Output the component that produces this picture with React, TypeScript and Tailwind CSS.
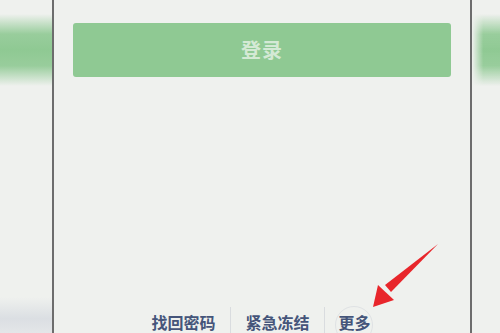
import React from "react";

export default function App() {
  return (
    <div
      className="w-[500px] h-[333px] overflow-hidden bg-[#eff1ee] flex relative"
      style={{ fontFamily: '"Noto Sans CJK SC", "Noto Sans", sans-serif' }}
    >
      {/* left blurred side */}
      <div className="w-[52px] h-full flex flex-col">
        <div className="h-[14px]" />
        <div className="h-[72px] bg-[linear-gradient(to_bottom,rgba(143,201,147,0)_0%,rgba(143,201,147,0.9)_28%,rgba(143,201,147,1)_50%,rgba(143,201,147,0.9)_72%,rgba(143,201,147,0)_100%)]" />
        <div className="flex-1" />
        <div className="h-[36px] bg-[linear-gradient(to_bottom,rgba(214,218,224,0)_0%,rgba(214,218,224,0.8)_60%,rgba(220,223,228,0.6)_100%)]" />
      </div>
      <div className="w-[2px] h-full bg-[#6d6d6d]" />
      {/* phone screen */}
      <div className="w-[416px] h-full flex flex-col px-[19px] pt-[23px]">
        <div className="h-[54px] rounded-[3px] bg-[#8fc993] flex items-center justify-center">
          <span className="text-[20px] font-bold text-[#d4e9d5] tracking-[1px] leading-none">登录</span>
        </div>
        <div className="flex-1" />
        <div className="h-[26px] flex items-stretch justify-center text-[16px] font-bold text-[#45557a] leading-none">
          <div className="flex items-center pl-[78px] pr-[15px] pt-[3px]">找回密码</div>
          <div className="w-px bg-[#d9dcdf]" />
          <div className="flex items-center px-[14px] pt-[3px]">紧急冻结</div>
          <div className="w-px bg-[#d9dcdf]" />
          <div className="flex items-center pl-[14px] pr-[80px] pt-[3px] relative">
            <span className="relative">
              更多
              <span className="absolute left-[-4px] top-[-8px] w-[38px] h-[38px] rounded-full border border-[#dfe2e4]" />
            </span>
          </div>
        </div>
      </div>
      <div className="w-[2px] h-full bg-[#6d6d6d]" />
      {/* right blurred side */}
      <div className="flex-1 h-full flex flex-col">
        <div className="h-[14px]" />
        <div className="h-[72px] bg-[linear-gradient(to_bottom,rgba(143,201,147,0)_0%,rgba(143,201,147,0.9)_28%,rgba(143,201,147,1)_50%,rgba(143,201,147,0.9)_72%,rgba(143,201,147,0)_100%)] [mask-image:linear-gradient(to_right,transparent,black_40%)]" />
        <div className="flex-1" />
      </div>
      {/* red arrow annotation */}
      <svg className="absolute left-0 top-0" width="500" height="333" viewBox="0 0 500 333">
        <polygon points="438,244 391,292 385,285" fill="#e8262b" />
        <polygon points="373,307 378,285 394,300" fill="#e8262b" />
      </svg>
    </div>
  );
}
